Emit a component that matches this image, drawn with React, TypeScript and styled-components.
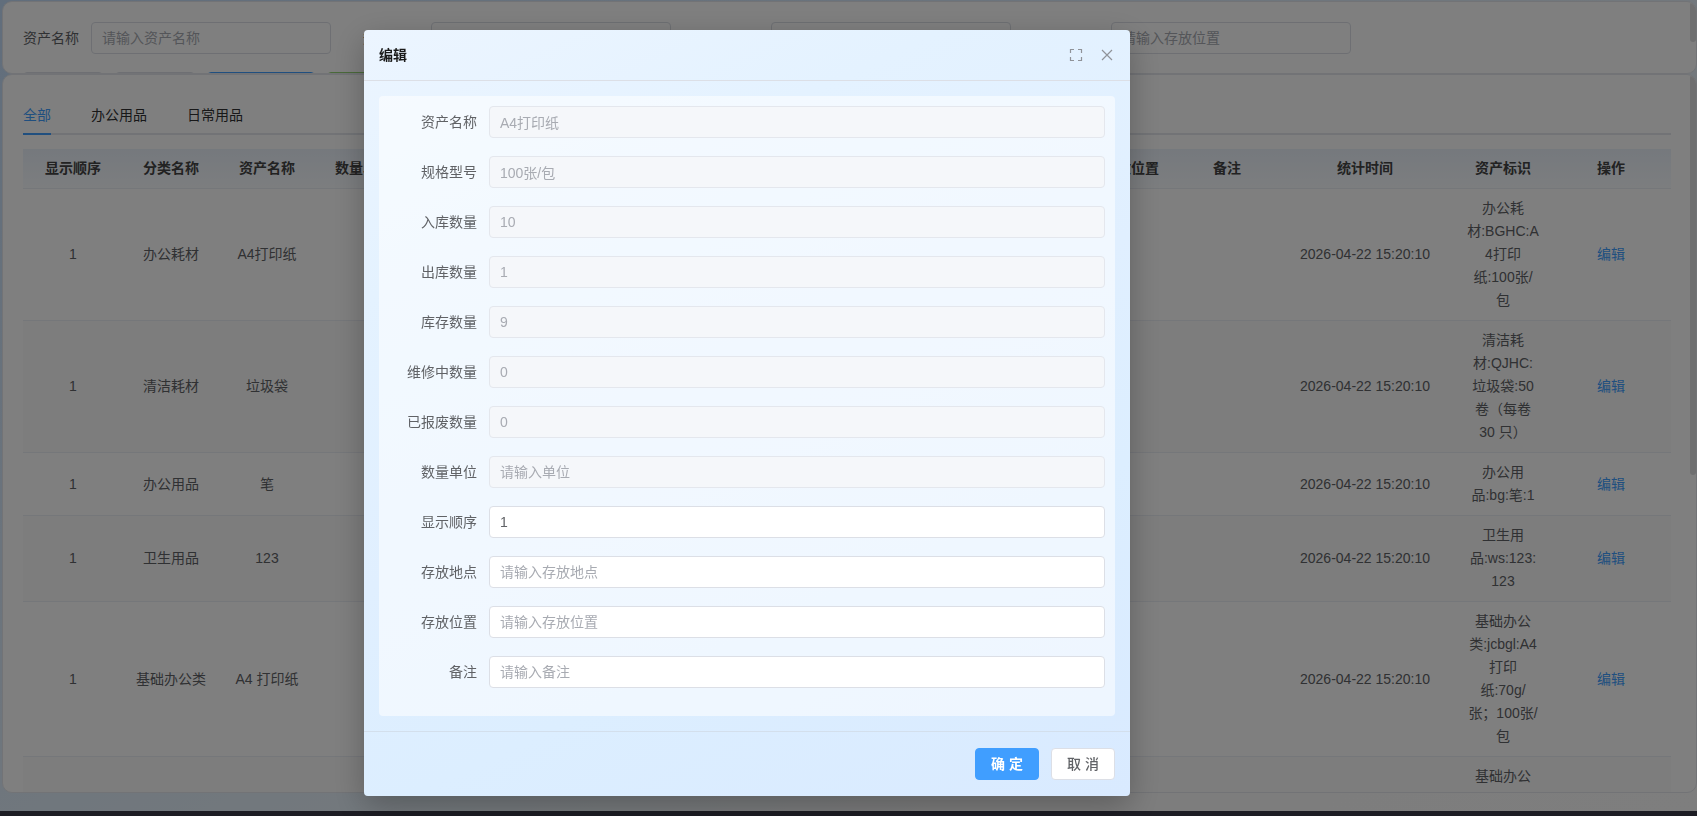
import React from "react";
import styled, { createGlobalStyle } from "styled-components";

const GlobalStyle = createGlobalStyle`
  *, *::before, *::after { box-sizing: border-box; }
  html, body, #root { height: 100%; margin: 0; }
  body {
    overflow: hidden;
    font: 14px/23px "Liberation Sans", "Noto Sans CJK SC", sans-serif;
    color: #606266;
  }
  button, input { font: inherit; }
`;

const Shell = styled.div`
  height: 100vh;
  display: flex;
  flex-direction: column;
`;

const Page = styled.main`
  flex: 1;
  min-height: 0;
  display: flex;
  flex-direction: column;
  padding: 1px 0 18px 2px;
  background: linear-gradient(150deg, #c3dcf8 0%, #d6e8fa 30%, #e9f3fa 60%, #fafafa 75%, #fcfcfc 100%);
`;

const TaskStrip = styled.div`
  height: 5px;
  background: #3a3a48;
`;

const Card = styled.section`
  position: relative;
  overflow: hidden;
  background: #fff;
  border: 1px solid #e4e7ed;
  border-radius: 10px;
  padding: 20px;
`;

const SearchCard = styled(Card)`
  flex: 0 0 73px;
`;

const ListCard = styled(Card)`
  flex: 1;
  min-height: 0;
  padding-right: 25px;
`;

const Thumb = styled.span<{ $size: number }>`
  position: absolute;
  top: 0;
  right: 0;
  width: 6px;
  height: ${(p) => p.$size}px;
  border-radius: 3px;
  background: #dedfe1;
`;

const SearchForm = styled.form`
  display: flex;
  gap: 32px;
  margin-bottom: 18px;
`;

const SearchField = styled.label`
  display: flex;
  align-items: center;
  gap: 12px;
  white-space: nowrap;
`;

const TextInput = styled.input`
  width: 100%;
  height: 32px;
  padding: 0 10px;
  border: 1px solid #dcdfe6;
  border-radius: 4px;
  background: #fff;
  color: #606266;
  outline: none;
  &::placeholder { color: #a8abb2; opacity: 1; }
  &:disabled { background: #f5f7fa; border-color: #e4e7ed; color: #a8abb2; }
`;

const SearchInput = styled(TextInput)`
  width: 240px;
`;

const Toolbar = styled.div`
  display: flex;
  gap: 12px;
`;

const tones = {
  plain: ["#dcdfe6", "#fff", "#606266"],
  primary: ["#409eff", "#ecf5ff", "#409eff"],
  success: ["#95d475", "#f0f9eb", "#67c23a"],
};

const ToolButton = styled.button<{ $tone: keyof typeof tones }>`
  height: 32px;
  min-width: 80px;
  padding: 0 25px;
  border: 1px solid ${(p) => tones[p.$tone][0]};
  border-radius: 4px;
  background: ${(p) => tones[p.$tone][1]};
  color: ${(p) => tones[p.$tone][2]};
`;

const Tabs = styled.nav`
  display: flex;
  gap: 40px;
  height: 40px;
  border-bottom: 2px solid #e4e7ed;
  margin-bottom: 14px;
`;

const Tab = styled.button<{ $active?: boolean }>`
  height: 40px;
  padding: 2px 0 0;
  border: 0;
  border-bottom: 2px solid ${(p) => (p.$active ? "#409eff" : "transparent")};
  background: none;
  color: ${(p) => (p.$active ? "#409eff" : "#303133")};
`;

const Table = styled.table`
  width: 100%;
  table-layout: fixed;
  border-collapse: separate;
  border-spacing: 0;
  text-align: center;

  th, td {
    padding: 8px 0;
    border-bottom: 1px solid #ebeef5;
  }
  th {
    color: #444;
    background: linear-gradient(#ebf2fb, #f9fcff);
    white-space: nowrap;
  }
  td { white-space: pre; }
  tbody tr:nth-child(even) td { background: #fafafa; }
`;

const EditLink = styled.a`
  color: #409eff;
  text-decoration: none;
`;

const Overlay = styled.div`
  position: fixed;
  inset: 0;
  display: grid;
  grid-template-columns: 364fr 766fr 567fr;
  align-items: start;
  padding-top: 30px;
  background: rgba(0, 0, 0, 0.5);
`;

const Dialog = styled.section`
  grid-column: 2;
  border-radius: 4px;
  background: linear-gradient(155deg, #ecf5ff 0%, #e4f2ff 24%, #e0efff 50%, #dceeff 70%, #d9eaff 100%);
  box-shadow: 0 10px 32px rgba(0, 0, 0, 0.26);
`;

const DialogHeader = styled.header`
  display: flex;
  align-items: center;
  gap: 16px;
  height: 51px;
  padding: 0 15px;
  border-bottom: 1px solid #dcdfe6;
`;

const DialogTitle = styled.h2`
  flex: 1;
  margin: 0;
  font-size: 14px;
  font-weight: 700;
  color: #1a1a1a;
`;

const IconButton = styled.button`
  display: flex;
  padding: 0;
  border: 0;
  background: none;
  color: #909399;
`;

const DialogForm = styled.form`
  margin: 15px;
  padding: 10px;
  border-radius: 4px;
  background: rgba(255, 255, 255, 0.55);
`;

const FormRow = styled.label`
  display: grid;
  grid-template-columns: 88px 1fr;
  gap: 12px;
  align-items: center;
  margin-bottom: 18px;
`;

const FormLabel = styled.span`
  text-align: right;
`;

const DialogFooter = styled.footer`
  display: flex;
  justify-content: flex-end;
  gap: 12px;
  padding: 16px 15px;
  border-top: 1px solid #d3dfec;
`;

const ActionButton = styled.button<{ $primary?: boolean }>`
  width: 64px;
  height: 32px;
  padding: 0;
  border: 1px solid ${(p) => (p.$primary ? "#409eff" : "#dcdfe6")};
  border-radius: 4px;
  background: ${(p) => (p.$primary ? "#409eff" : "#fff")};
  color: ${(p) => (p.$primary ? "#fff" : "#606266")};
  font-weight: ${(p) => (p.$primary ? 700 : 500)};
`;

const searchFields = ["资产名称", "规格型号", "存放地点", "存放位置"];

const columns: [string, number][] = [
  ["显示顺序", 100],
  ["分类名称", 96],
  ["资产名称", 96],
  ["数量单位", 96],
  ["规格型号", 96],
  ["入库数量", 96],
  ["出库数量", 96],
  ["库存数量", 96],
  ["维修中数量", 96],
  ["已报废数量", 96],
  ["存放地点", 96],
  ["存放位置", 96],
  ["备注", 96],
  ["统计时间", 180],
  ["资产标识", 96],
  ["操作", 120],
];
const totalWidth = columns.reduce((sum, [, width]) => sum + width, 0);

const rows = [
  { category: "办公耗材", name: "A4打印纸", tag: "办公耗\n材:BGHC:A\n4打印\n纸:100张/\n包" },
  { category: "清洁耗材", name: "垃圾袋", tag: "清洁耗\n材:QJHC:\n垃圾袋:50\n卷（每卷\n30 只）" },
  { category: "办公用品", name: "笔", tag: "办公用\n品:bg:笔:1" },
  { category: "卫生用品", name: "123", tag: "卫生用\n品:ws:123:\n123" },
  { category: "基础办公类", name: "A4 打印纸", tag: "基础办公\n类:jcbgl:A4\n打印\n纸:70g/\n张；100张/\n包" },
  { category: "基础办公类", name: "笔记本", tag: "基础办公\n类:jcbgl:笔\n记本:A5" },
];

type Field = { label: string; value?: string; placeholder?: string; disabled?: boolean };
const fields: Field[] = [
  { label: "资产名称", value: "A4打印纸", disabled: true },
  { label: "规格型号", value: "100张/包", disabled: true },
  { label: "入库数量", value: "10", disabled: true },
  { label: "出库数量", value: "1", disabled: true },
  { label: "库存数量", value: "9", disabled: true },
  { label: "维修中数量", value: "0", disabled: true },
  { label: "已报废数量", value: "0", disabled: true },
  { label: "数量单位", placeholder: "请输入单位", disabled: true },
  { label: "显示顺序", value: "1" },
  { label: "存放地点", placeholder: "请输入存放地点" },
  { label: "存放位置", placeholder: "请输入存放位置" },
  { label: "备注", placeholder: "请输入备注" },
];

const ExpandIcon = () => (
  <svg width="14" height="14" viewBox="0 0 14 14" fill="none" stroke="currentColor" strokeWidth="1.2" aria-hidden="true">
    <path d="M1.5 5V1.5H5M9 1.5H12.5V5M12.5 9V12.5H9M5 12.5H1.5V9" />
  </svg>
);

const CloseIcon = () => (
  <svg width="16" height="16" viewBox="0 0 16 16" fill="none" stroke="currentColor" strokeWidth="1.2" aria-hidden="true">
    <path d="M3 3L13 13M13 3L3 13" />
  </svg>
);

export default function App() {
  return (
    <>
      <GlobalStyle />
      <Shell>
        <Page>
          <SearchCard>
            <SearchForm>
              {searchFields.map((label) => (
                <SearchField key={label}>
                  {label}
                  <SearchInput placeholder={`请输入${label}`} />
                </SearchField>
              ))}
            </SearchForm>
            <Toolbar>
              <ToolButton $tone="plain">搜索</ToolButton>
              <ToolButton $tone="plain">重置</ToolButton>
              <ToolButton $tone="primary">更新统计</ToolButton>
              <ToolButton $tone="success">导出</ToolButton>
            </Toolbar>
            <Thumb $size={40} />
          </SearchCard>
          <ListCard>
            <Tabs>
              <Tab $active>全部</Tab>
              <Tab>办公用品</Tab>
              <Tab>日常用品</Tab>
            </Tabs>
            <Table>
              <colgroup>
                {columns.map(([title, width]) => (
                  <col key={title} style={{ width: `${(width / totalWidth) * 100}%` }} />
                ))}
              </colgroup>
              <thead>
                <tr>
                  {columns.map(([title]) => (
                    <th key={title}>{title}</th>
                  ))}
                </tr>
              </thead>
              <tbody>
                {rows.map((row, i) => (
                  <tr key={i}>
                    <td>1</td>
                    <td>{row.category}</td>
                    <td>{row.name}</td>
                    {columns.slice(3, 13).map(([title]) => (
                      <td key={title} />
                    ))}
                    <td>2026-04-22 15:20:10</td>
                    <td>{row.tag}</td>
                    <td>
                      <EditLink href="#">编辑</EditLink>
                    </td>
                  </tr>
                ))}
              </tbody>
            </Table>
            <Thumb $size={400} />
          </ListCard>
        </Page>
        <TaskStrip />
      </Shell>
      <Overlay>
        <Dialog role="dialog" aria-modal="true" aria-labelledby="dialog-title">
          <DialogHeader>
            <DialogTitle id="dialog-title">编辑</DialogTitle>
            <IconButton aria-label="全屏">
              <ExpandIcon />
            </IconButton>
            <IconButton aria-label="关闭">
              <CloseIcon />
            </IconButton>
          </DialogHeader>
          <DialogForm>
            {fields.map((f) => (
              <FormRow key={f.label}>
                <FormLabel>{f.label}</FormLabel>
                <TextInput defaultValue={f.value} placeholder={f.placeholder} disabled={f.disabled} />
              </FormRow>
            ))}
          </DialogForm>
          <DialogFooter>
            <ActionButton $primary>确 定</ActionButton>
            <ActionButton>取 消</ActionButton>
          </DialogFooter>
        </Dialog>
      </Overlay>
    </>
  );
}
